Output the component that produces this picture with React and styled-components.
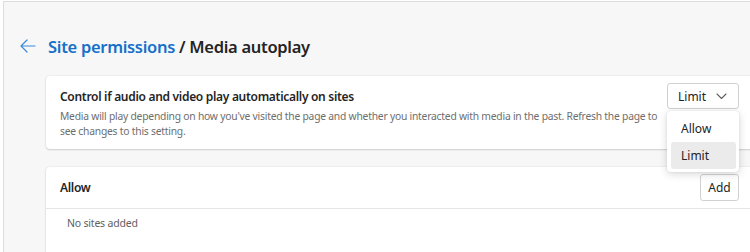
import React from 'react';
import styled, { createGlobalStyle } from 'styled-components';

const GlobalStyle = createGlobalStyle`
  html, body {
    margin: 0;
    padding: 0;
    background: #ffffff;
    overflow: hidden;
  }
  body {
    font-family: "Noto Sans", "Open Sans", "Liberation Sans", sans-serif;
    color: #242424;
  }
`;

const Frame = styled.div`
  margin: 1px 0 0 3px;
  height: 260px;
  background: #f7f7f7;
  border-top: 1px solid #dcdcdc;
  border-left: 1px solid #dcdcdc;
  padding-top: 32px;
  box-sizing: border-box;
`;

const Header = styled.div`
  display: flex;
  align-items: center;
  height: 24px;
  padding-left: 16px;
  gap: 12px;
  margin-bottom: 18px;
`;

const BackButton = styled.button`
  display: flex;
  align-items: center;
  justify-content: center;
  width: 16px;
  height: 16px;
  padding: 0;
  border: none;
  background: transparent;
  color: #3d8ad6;
  cursor: pointer;
`;

const Title = styled.h1`
  margin: 0;
  font-size: 16.5px;
  letter-spacing: -0.3px;
  font-weight: 600;
  color: #242424;
  white-space: nowrap;
`;

const Crumb = styled.a`
  color: #1570c8;
  text-decoration: none;
`;

const Content = styled.div`
  padding-left: 42px;
  margin-right: -4px;
  display: flex;
  flex-direction: column;
  gap: 18px;
`;

const Card = styled.section`
  background: #ffffff;
  border-radius: 4px;
  box-shadow: 0 0 2px rgba(0, 0, 0, 0.12), 0 1px 2px rgba(0, 0, 0, 0.14);
`;

const SettingRow = styled.div`
  display: flex;
  align-items: flex-start;
  gap: 6px;
  padding: 7px 15px 10px 14px;
`;

const SettingText = styled.div`
  flex: 1;
  padding-top: 5px;
`;

const SettingTitle = styled.div`
  font-size: 12px;
  letter-spacing: -0.3px;
  font-weight: 600;
  line-height: 18px;
  margin-bottom: 3px;
`;

const SettingDesc = styled.div`
  font-size: 10.3px;
  letter-spacing: -0.22px;
  line-height: 15px;
  color: #6e6e6e;
`;

const SelectWrap = styled.div`
  position: relative;
`;

const SelectButton = styled.button`
  display: flex;
  align-items: center;
  justify-content: space-between;
  width: 72px;
  height: 26px;
  padding: 0 11px 0 10px;
  box-sizing: border-box;
  background: #ffffff;
  border: 1px solid #d1d1d1;
  border-radius: 3px;
  font-family: inherit;
  font-size: 12px;
  color: #242424;
`;

const Menu = styled.ul`
  position: absolute;
  top: 28px;
  left: 0;
  width: 72px;
  margin: 0;
  padding: 4px 3px 3px 4px;
  box-sizing: border-box;
  list-style: none;
  background: #ffffff;
  border-radius: 4px;
  box-shadow: 0 2px 8px rgba(0, 0, 0, 0.16), 0 0 2px rgba(0, 0, 0, 0.1);
  z-index: 2;
`;

const MenuItem = styled.li`
  height: 27px;
  display: flex;
  align-items: center;
  padding-left: 10px;
  border-radius: 3px;
  font-size: 12px;
  color: #242424;
  background: ${p => (p.$selected ? '#ebebeb' : 'transparent')};
`;

const ListHeader = styled.div`
  display: flex;
  align-items: center;
  justify-content: space-between;
  height: 41px;
  padding: 0 15px 0 14px;
  border-bottom: 1px solid #e6e6e6;
`;

const ListTitle = styled.div`
  font-size: 12px;
  letter-spacing: -0.3px;
  font-weight: 600;
`;

const AddButton = styled.button`
  width: 39px;
  height: 27px;
  padding: 0;
  background: #ffffff;
  border: 1px solid #d1d1d1;
  border-radius: 3px;
  font-family: inherit;
  font-size: 12px;
  color: #242424;
`;

const EmptyText = styled.div`
  padding: 7px 0 30px 21px;
  font-size: 10.5px;
  letter-spacing: -0.2px;
  line-height: 15px;
  color: #616161;
`;

const ArrowIcon = () => (
  <svg width="16" height="14" viewBox="0 0 16 14" fill="none">
    <path d="M15 7H1.5M7 1L1 7l6 6" stroke="currentColor" strokeWidth="1.2" strokeLinecap="round" strokeLinejoin="round" />
  </svg>
);

const ChevronIcon = () => (
  <svg width="11" height="7" viewBox="0 0 11 7" fill="none">
    <path d="M1 1l4.5 4.5L10 1" stroke="#616161" strokeWidth="1.1" strokeLinecap="round" strokeLinejoin="round" />
  </svg>
);

export default function App() {
  return (
    <>
      <GlobalStyle />
      <Frame>
        <Header>
          <BackButton aria-label="Back">
            <ArrowIcon />
          </BackButton>
          <Title>
            <Crumb href="#">Site permissions</Crumb> / Media autoplay
          </Title>
        </Header>
        <Content>
          <Card>
            <SettingRow>
              <SettingText>
                <SettingTitle>Control if audio and video play automatically on sites</SettingTitle>
                <SettingDesc>
                  Media will play depending on how you've visited the page and whether you interacted with media in the past. Refresh the page to see changes to this setting.
                </SettingDesc>
              </SettingText>
              <SelectWrap>
                <SelectButton>
                  Limit
                  <ChevronIcon />
                </SelectButton>
                <Menu>
                  <MenuItem>Allow</MenuItem>
                  <MenuItem $selected>Limit</MenuItem>
                </Menu>
              </SelectWrap>
            </SettingRow>
          </Card>
          <Card>
            <ListHeader>
              <ListTitle>Allow</ListTitle>
              <AddButton>Add</AddButton>
            </ListHeader>
            <EmptyText>No sites added</EmptyText>
          </Card>
        </Content>
      </Frame>
    </>
  );
}
